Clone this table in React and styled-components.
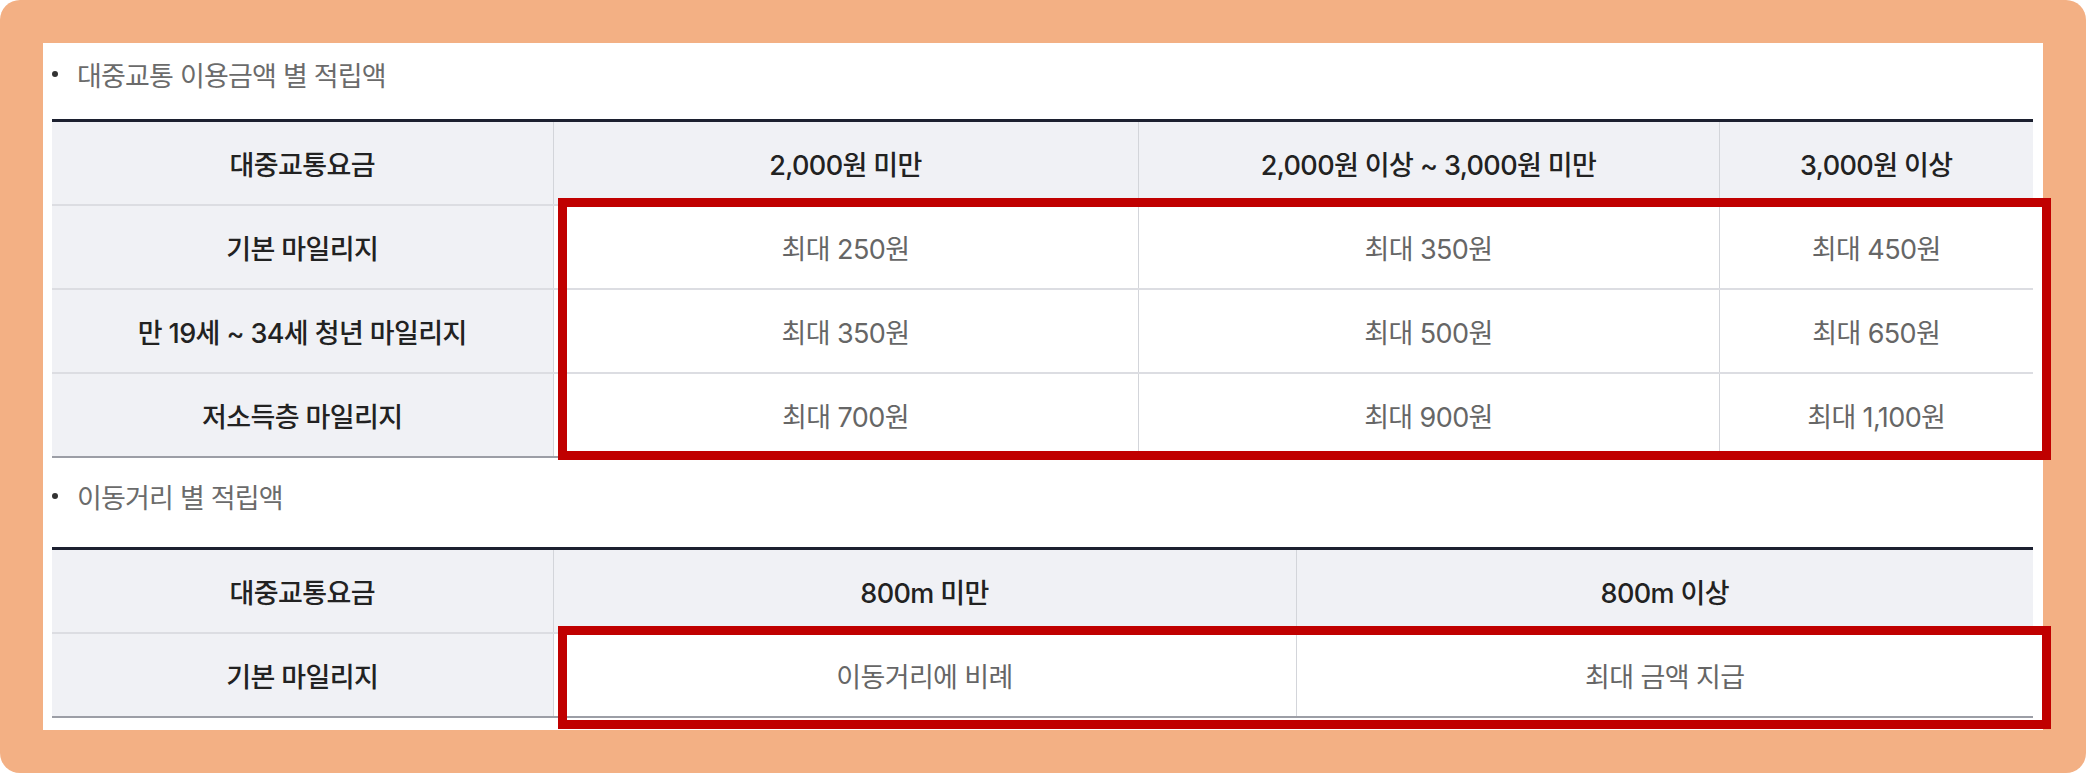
import React from 'react';
import styled, { createGlobalStyle } from 'styled-components';

const fareTable = {
  cols: [501, 585, 581, 314],
  head: ['대중교통요금', '2,000원 미만', '2,000원 이상 ~ 3,000원 미만', '3,000원 이상'],
  rows: [
    ['기본 마일리지', '최대 250원', '최대 350원', '최대 450원'],
    ['만 19세 ~ 34세 청년 마일리지', '최대 350원', '최대 500원', '최대 650원'],
    ['저소득층 마일리지', '최대 700원', '최대 900원', '최대 1,100원'],
  ],
};

const distanceTable = {
  cols: [501, 743, 737],
  head: ['대중교통요금', '800m 미만', '800m 이상'],
  rows: [['기본 마일리지', '이동거리에 비례', '최대 금액 지급']],
};

const App = () => {
  return (
    <>
      <GlobalStyle />
      <Frame>
        <Panel>
          <Section>
            <Title $space={27}>대중교통 이용금액 별 적립액</Title>
            <TableWrap>
              <MileageTable data={fareTable} />
              <Highlight $bottom={-2} />
            </TableWrap>
          </Section>

          <Section $gap={20}>
            <Title $space={33}>이동거리 별 적립액</Title>
            <TableWrap>
              <MileageTable data={distanceTable} />
              <Highlight $bottom={-11} />
            </TableWrap>
          </Section>
        </Panel>
      </Frame>
    </>
  );
};

const MileageTable = ({ data }) => (
  <Table>
    <colgroup>
      {data.cols.map((w, i) => (
        <col key={i} style={{ width: w }} />
      ))}
    </colgroup>
    <thead>
      <tr>
        {data.head.map((h, i) => (
          <HeadCell key={i}>{h}</HeadCell>
        ))}
      </tr>
    </thead>
    <tbody>
      {data.rows.map((row, r) => (
        <tr key={r}>
          {row.map((c, i) =>
            i === 0 ? <RowLabel key={i}>{c}</RowLabel> : <Cell key={i}>{c}</Cell>
          )}
        </tr>
      ))}
    </tbody>
  </Table>
);

const GlobalStyle = createGlobalStyle`
  body {
    margin: 0;
    background: #ffffff;
    font-family: Inter, "Noto Sans CJK KR", sans-serif;
  }
`;

const Frame = styled.div`
  width: 2086px;
  height: 773px;
  box-sizing: border-box;
  padding: 43px;
  background: #f3b084;
  border-radius: 20px;
`;

const Panel = styled.div`
  height: 100%;
  box-sizing: border-box;
  background: #ffffff;
  padding: 13px 10px 0 9px;
`;

const Section = styled.section`
  margin-top: ${({ $gap }) => ($gap ? `${$gap}px` : '0')};
`;

const Title = styled.div`
  display: flex;
  align-items: center;
  gap: 19px;
  height: 36px;
  margin-bottom: ${({ $space }) => $space}px;
  font-size: 27px;
  letter-spacing: -0.8px;
  color: #6b6b6b;

  &::before {
    content: '';
    flex: none;
    width: 6px;
    height: 6px;
    border-radius: 50%;
    background: #333;
  }
`;

const TableWrap = styled.div`
  position: relative;
`;

const Table = styled.table`
  width: 100%;
  border-collapse: collapse;
  table-layout: fixed;
  border-top: 3px solid #1c2030;
  border-bottom: 2px solid #9c9ea6;
  font-size: 27px;
  letter-spacing: -0.6px;
`;

const BaseCell = styled.td`
  height: 82px;
  padding: 0;
  text-align: center;
  vertical-align: middle;
  border-bottom: 2px solid #dcdde2;
  border-left: 1px solid #d3d5da;

  &:first-child {
    border-left: none;
  }

  tr:last-child > & {
    border-bottom: none;
  }
`;

const HeadCell = styled(BaseCell).attrs({ as: 'th' })`
  background: #f0f1f5;
  color: #222;
  font-weight: 500;

  thead tr:last-child > & {
    border-bottom: 2px solid #dcdde2;
  }
`;

const RowLabel = styled(BaseCell)`
  background: #f0f1f5;
  color: #222;
  font-weight: 500;
`;

const Cell = styled(BaseCell)`
  background: #ffffff;
  color: #666;
  font-weight: 400;
`;

const Highlight = styled.div`
  position: absolute;
  left: 506px;
  top: 79px;
  right: -18px;
  bottom: ${({ $bottom }) => $bottom}px;
  border: 9px solid #c00000;
  pointer-events: none;
`;

export default App;
